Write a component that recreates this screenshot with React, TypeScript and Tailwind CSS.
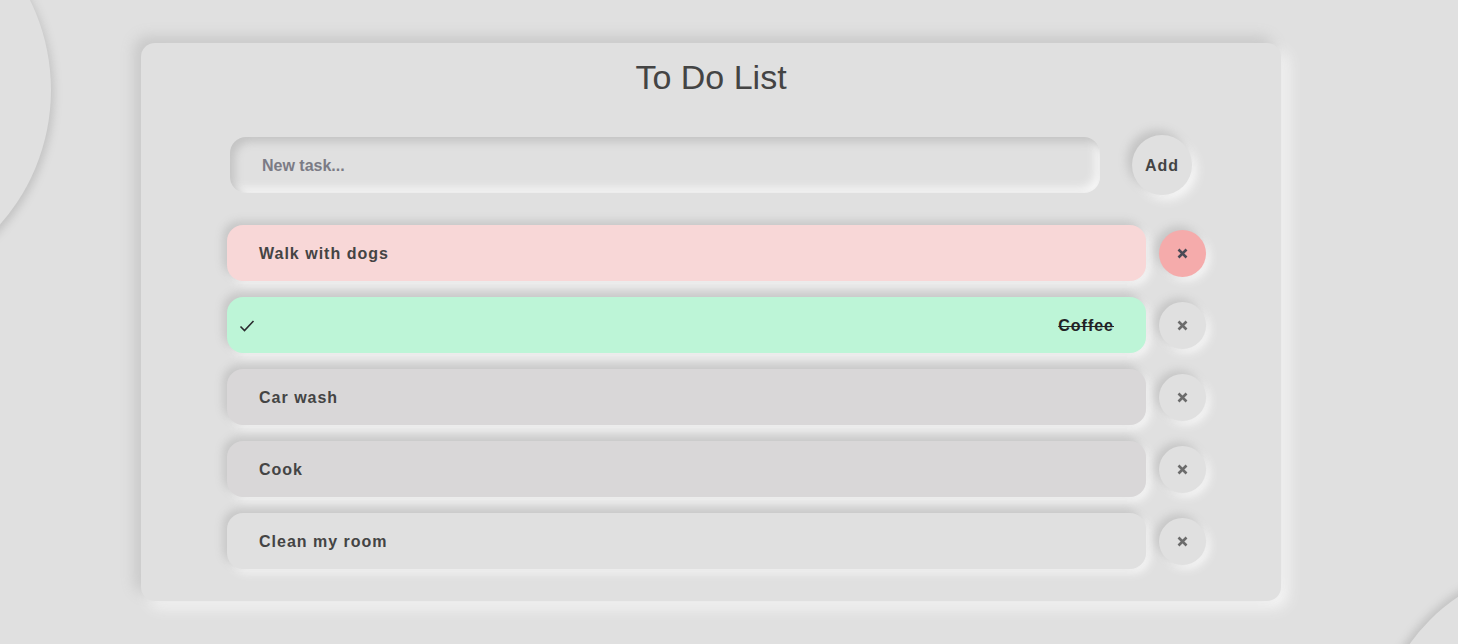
import React from "react";

type Task = { text: string; variant: "pink" | "done" | "gray" | "plain" };

const tasks: Task[] = [
  { text: "Walk with dogs", variant: "pink" },
  { text: "Coffee", variant: "done" },
  { text: "Car wash", variant: "gray" },
  { text: "Cook", variant: "gray" },
  { text: "Clean my room", variant: "plain" },
];

function XIcon({ color }: { color: string }) {
  return (
    <svg width="11" height="11" viewBox="0 0 11 11" fill="none">
      <path d="M1.5 1.5 L9.5 9.5 M9.5 1.5 L1.5 9.5" stroke={color} strokeWidth="2.6" strokeLinecap="butt" />
    </svg>
  );
}

function CheckIcon() {
  return (
    <svg width="16" height="14" viewBox="0 0 16 14" fill="none">
      <path d="M1.5 7.5 L5.5 11.5 L14.5 2" stroke="#2a2a2e" strokeWidth="1.6" />
    </svg>
  );
}

function Row({ task }: { task: Task }) {
  const itemBg =
    task.variant === "pink"
      ? "bg-[#f8d7d7]"
      : task.variant === "done"
      ? "bg-[#bdf5d7]"
      : task.variant === "gray"
      ? "bg-[#d9d7d8]"
      : "bg-[#e0e0e0]";
  const btnBg = task.variant === "pink" ? "bg-[#f5abab]" : "bg-[#e0e0e0]";
  return (
    <div className="flex items-center gap-[13px]">
      <div
        className={`${itemBg} w-[919px] h-[56px] rounded-[16px] flex items-center pt-[2px] shadow-[-4px_-4px_8px_#c6c6c6,4px_4px_8px_#f6f6f6] ${
          task.variant === "done" ? "justify-between pl-[12px] pr-[32px]" : "px-[32px]"
        }`}
      >
        {task.variant === "done" && <CheckIcon />}
        <span
          className={`font-bold text-[16px] tracking-[1px] ${
            task.variant === "done" ? "text-[#222226] line-through" : "text-[#444]"
          }`}
        >
          {task.text}
        </span>
      </div>
      <button
        className={`${btnBg} w-[47px] h-[47px] rounded-full flex items-center justify-center shadow-[-4px_-4px_8px_#c6c6c6,4px_4px_8px_#f6f6f6]`}
      >
        <XIcon color={task.variant === "pink" ? "#4a4a55" : "#6b6b6b"} />
      </button>
    </div>
  );
}

export default function App() {
  return (
    <div
      className="relative w-[1458px] h-[644px] overflow-hidden bg-[#e0e0e0]"
      style={{ fontFamily: '"Liberation Sans", Arial, sans-serif' }}
    >
      <div className="absolute left-[-355px] top-[-113px] w-[406px] h-[406px] rounded-full bg-[#e0e0e0] shadow-[3px_3px_8px_#c2c2c2,-3px_-3px_8px_#f2f2f2]" />
      <div className="absolute left-[1376px] top-[566px] w-[368px] h-[368px] rounded-full bg-[#e0e0e0] shadow-[-3px_-3px_8px_#c2c2c2,3px_3px_8px_#f2f2f2]" />

      <div className="relative pt-[43px] pl-[141px]">
        <div className="w-[1140px] h-[558px] rounded-[14px] bg-[#e0e0e0] shadow-[-7px_-7px_14px_#c9c9c9,7px_7px_14px_#f5f5f5] flex flex-col">
          <h1 className="mt-[14px] h-[40px] leading-[40px] text-center text-[34px] text-[#444] font-normal">
            To Do List
          </h1>
          <div className="mt-[38px] pl-[89px] flex items-center gap-[32px] h-[60px]">
            <div className="w-[870px] h-[56px] rounded-[16px] bg-[#e0e0e0] shadow-[inset_5px_5px_8px_#c4c4c4,inset_-5px_-5px_8px_#f6f6f6] flex items-center pl-[32px] pt-[2px]">
              <span className="font-bold text-[16px] text-[#7b7b85]">New task...</span>
            </div>
            <button className="w-[60px] h-[60px] rounded-full bg-[#e0e0e0] shadow-[-5px_-5px_10px_#c4c4c4,5px_5px_10px_#f6f6f6] flex items-center justify-center pt-[2px] font-bold text-[16px] tracking-[1px] text-[#444]">
              Add
            </button>
          </div>
          <div className="mt-[30px] pl-[86px] flex flex-col gap-[16px]">
            {tasks.map((t) => (
              <Row key={t.text} task={t} />
            ))}
          </div>
        </div>
      </div>
    </div>
  );
}
